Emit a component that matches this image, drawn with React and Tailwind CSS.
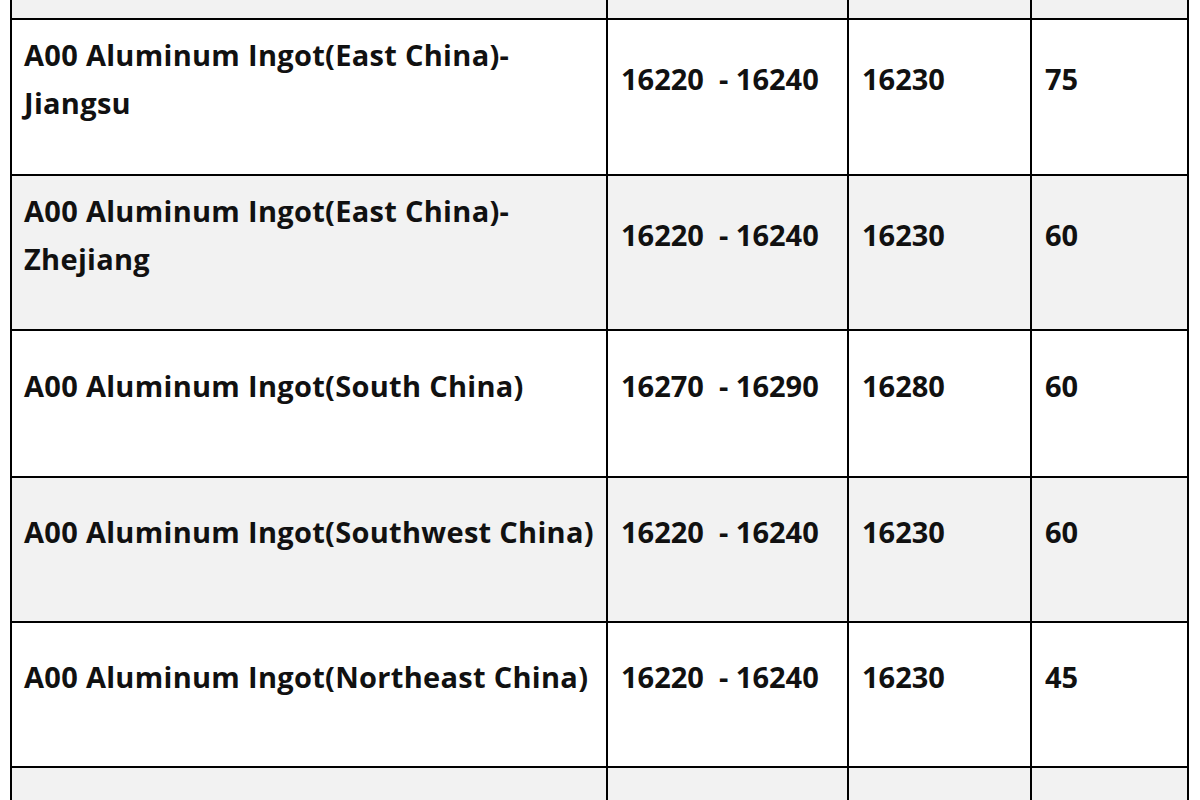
const rows = [
  { bg: 'bg-[#f2f2f2]', h: 'h-[20px]', cells: ['', '', '', ''] },
  { bg: 'bg-white', h: 'h-[156px]', cells: [['A00 Aluminum Ingot(East China)-', 'Jiangsu'], '16220\u00a0\u00a0- 16240', '16230', '75'] },
  { bg: 'bg-[#f2f2f2]', h: 'h-[155px]', cells: [['A00 Aluminum Ingot(East China)-', 'Zhejiang'], '16220\u00a0\u00a0- 16240', '16230', '60'] },
  { bg: 'bg-white', h: 'h-[147px]', cells: ['A00 Aluminum Ingot(South China)', '16270\u00a0\u00a0- 16290', '16280', '60'] },
  { bg: 'bg-[#f2f2f2]', h: 'h-[145px]', cells: ['A00 Aluminum Ingot(Southwest China)', '16220\u00a0\u00a0- 16240', '16230', '60'] },
  { bg: 'bg-white', h: 'h-[145px]', cells: ['A00 Aluminum Ingot(Northeast China)', '16220\u00a0\u00a0- 16240', '16230', '45'] },
  { bg: 'bg-[#f2f2f2]', h: 'h-[160px]', cells: ['', '', '', ''] },
];

const Cell = ({ value, first }) => (
  <div
    className={`flex items-center border-r-2 border-black pb-[36px] ${
      first ? 'pl-[12px] tracking-[0.3px]' : 'pl-[13px]'
    }`}
  >
    {Array.isArray(value) ? (
      <div className="flex flex-col">
        {value.map((line) => (
          <span key={line}>{line}</span>
        ))}
      </div>
    ) : (
      <span>{value}</span>
    )}
  </div>
);

export default function App() {
  return (
    <div className="h-[800px] w-[1200px] overflow-hidden bg-white pl-[10px]">
      <div className="w-[1179px] border-l-2 border-black font-['Open_Sans',sans-serif] text-[29px] font-bold leading-[48px] text-[#111]">
        {rows.map((row, i) => (
          <div
            key={i}
            className={`grid grid-cols-[596px_241px_183px_157px] border-b-2 border-black ${row.bg} ${row.h}`}
          >
            {row.cells.map((c, j) => (
              <Cell key={j} value={c} first={j === 0} />
            ))}
          </div>
        ))}
      </div>
    </div>
  );
}
